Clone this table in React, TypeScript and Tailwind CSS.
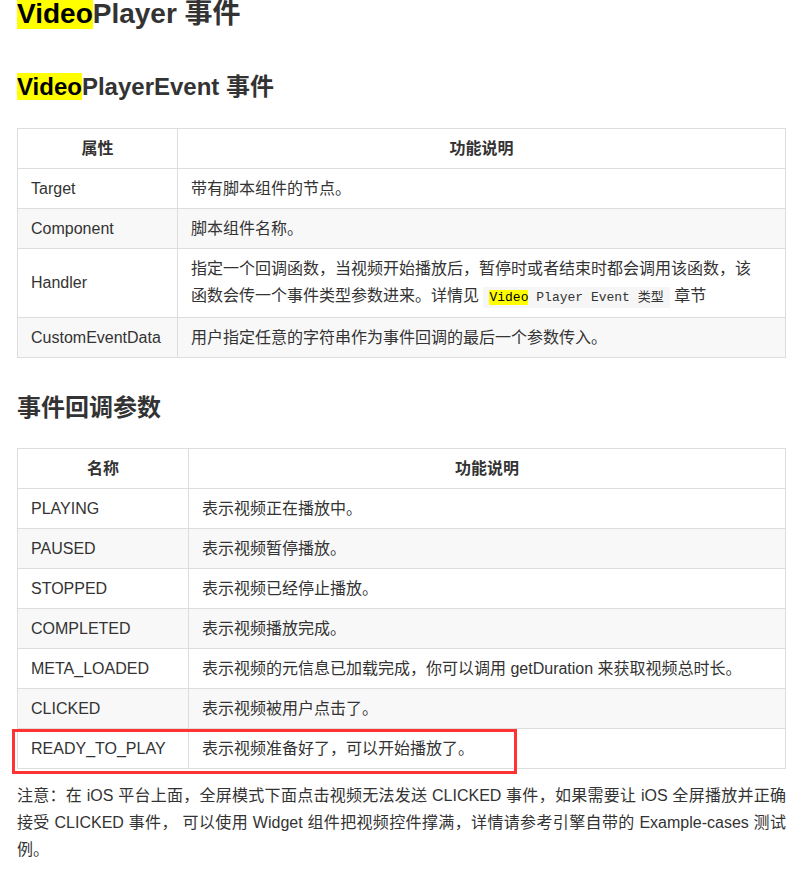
// VideoPlayer 事件文档页
const FONT = "[font-family:'Liberation_Sans','Noto_Sans_CJK_SC',sans-serif]";

type Row = { name: string; desc: React.ReactNode };

const propRows: Row[] = [
  { name: "Target", desc: "带有脚本组件的节点。" },
  { name: "Component", desc: "脚本组件名称。" },
  {
    name: "Handler",
    desc: (
      <>
        指定一个回调函数，当视频开始播放后，暂停时或者结束时都会调用该函数，该
        <br />
        函数会传一个事件类型参数进来。详情见{" "}
        <code className="bg-[#f6f6f6] px-[6px] py-[3px] text-[13px] text-[#333] [font-family:'Liberation_Mono','Noto_Sans_CJK_SC',monospace]">
          <mark className="bg-[#ff0] text-black">Video</mark> Player Event 类型
        </code>{" "}
        章节
      </>
    ),
  },
  { name: "CustomEventData", desc: "用户指定任意的字符串作为事件回调的最后一个参数传入。" },
];

const eventRows: Row[] = [
  { name: "PLAYING", desc: "表示视频正在播放中。" },
  { name: "PAUSED", desc: "表示视频暂停播放。" },
  { name: "STOPPED", desc: "表示视频已经停止播放。" },
  { name: "COMPLETED", desc: "表示视频播放完成。" },
  { name: "META_LOADED", desc: "表示视频的元信息已加载完成，你可以调用 getDuration 来获取视频总时长。" },
  { name: "CLICKED", desc: "表示视频被用户点击了。" },
  { name: "READY_TO_PLAY", desc: "表示视频准备好了，可以开始播放了。" },
];

function DocTable({ head, rows, firstCol }: { head: string; rows: Row[]; firstCol: string }) {
  return (
    <table className="w-full table-fixed border-collapse">
      <colgroup>
        <col className={firstCol} />
        <col />
      </colgroup>
      <thead>
        <tr>
          <th className="border border-[#ddd] px-[13px] py-[6px] text-center font-bold leading-[27px]">{head}</th>
          <th className="border border-[#ddd] px-[13px] py-[6px] text-center font-bold leading-[27px]">功能说明</th>
        </tr>
      </thead>
      <tbody>
        {rows.map((r, i) => (
          <tr key={r.name} className={i % 2 === 1 ? "bg-[#f8f8f8]" : "bg-white"}>
            <td className="border border-[#ddd] px-[13px] py-[6px] leading-[27px]">{r.name}</td>
            <td className="border border-[#ddd] px-[13px] py-[6px] leading-[27px]">{r.desc}</td>
          </tr>
        ))}
      </tbody>
    </table>
  );
}

export default function App() {
  return (
    <div className={`${FONT} min-h-[871px] overflow-hidden bg-white pl-[17px] pr-[12px] text-[16px] text-[#333]`}>
      <h1 className="text-[28px] font-bold leading-[28px]">
        <mark className="bg-[#ff0] text-black">Video</mark>Player 事件
      </h1>

      <h2 className="mt-[45px] text-[24px] font-bold leading-[1.2]">
        <mark className="bg-[#ff0] text-black">Video</mark>PlayerEvent 事件
      </h2>

      <div className="mt-[26px]">
        <DocTable head="属性" rows={propRows} firstCol="w-[160px]" />
      </div>

      <h2 className="mt-[36px] text-[24px] font-bold leading-[1.2]">事件回调参数</h2>

      <div className="relative mt-[25px]">
        <DocTable head="名称" rows={eventRows} firstCol="w-[171px]" />
        <div className="pointer-events-none absolute left-[-5px] top-[281px] h-[45px] w-[505px] border-[3px] border-[#f33]" />
      </div>

      <p className="mt-[13px] leading-[27px]">
        <span className="block whitespace-nowrap [text-align-last:justify]">
          注意：在 iOS 平台上面，全屏模式下面点击视频无法发送 CLICKED 事件，如果需要让 iOS 全屏播放并正确
        </span>
        <span className="block whitespace-nowrap [text-align-last:justify]">
          接受 CLICKED 事件， 可以使用 Widget 组件把视频控件撑满，详情请参考引擎自带的 Example-cases 测试
        </span>
        <span className="block">例。</span>
      </p>
    </div>
  );
}
